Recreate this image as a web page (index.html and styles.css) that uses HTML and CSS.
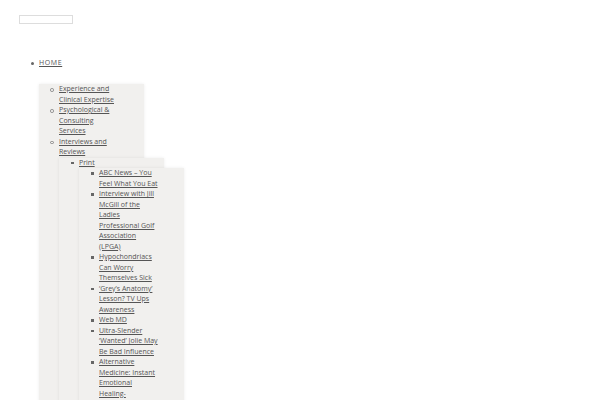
FILE: index.html
```html
<!DOCTYPE html>
<html>
<head>
<meta charset="utf-8">
<link rel="stylesheet" href="styles.css">
</head>
<body>
<div class="page">
  <div class="search"></div>
  <ul class="menu">
    <li><a class="top-link" href="#">HOME</a>
      <ul class="sub lvl2">
        <li><a href="#">Experience and Clinical Expertise</a></li>
        <li><a href="#">Psychological &amp; Consulting Services</a></li>
        <li><a href="#">Interviews and Reviews</a>
          <ul class="sub lvl3">
            <li><a href="#">Print</a>
              <ul class="sub lvl4">
                <li><a href="#">ABC News – You Feel What You Eat</a></li>
                <li><a href="#">Interview with Jill McGill of the Ladies Professional Golf Association (LPGA)</a></li>
                <li><a href="#">Hypochondriacs Can Worry Themselves Sick</a></li>
                <li><a href="#">‘Grey’s Anatomy’ Lesson? TV Ups Awareness</a></li>
                <li><a href="#">Web MD</a></li>
                <li><a href="#">Ultra-Slender ‘Wanted’ Jolie May Be Bad Influence</a></li>
                <li><a href="#">Alternative Medicine: Instant Emotional Healing- Acupressure for the Emotions</a></li>
                <li><a href="#">Stress Relief</a></li>
              </ul>
            </li>
          </ul>
        </li>
      </ul>
    </li>
  </ul>
</div>
</body>
</html>
```
FILE: styles.css
```css
html, body {
  margin: 0;
  padding: 0;
  background: #ffffff;
}
body {
  font-family: "Open Sans", "Liberation Sans", sans-serif;
  font-size: 7px;
  line-height: 10.5px;
  color: #555555;
}
.page {
  padding: 15px 0 0 19px;
}
.search {
  width: 52px;
  height: 7px;
  border: 1px solid #dddddd;
  background: #ffffff;
}
ul {
  list-style: none;
}
li {
  position: relative;
}
li::before {
  content: "";
  position: absolute;
  left: -8px;
  top: 4px;
  width: 2.5px;
  height: 2.5px;
  background: #666666;
}
.menu {
  margin: 34px 0 0 0;
  padding: 0 0 0 20px;
}
.menu > li::before {
  border-radius: 50%;
  left: -8.5px;
  width: 3px;
  height: 3px;
}
.lvl2 > li::before {
  box-sizing: border-box;
  border-radius: 50%;
  left: -9px;
  width: 3.5px;
  height: 3.5px;
  background: transparent;
  border: 0.8px solid #888888;
}
a {
  color: #555555;
  text-decoration: underline;
}
.top-link {
  letter-spacing: 0.6px;
}
.sub {
  width: 105px;
  box-sizing: border-box;
  margin: 0;
  padding: 0 25.5px 0 20px;
  background: #f1f0ee;
  box-shadow: 0 0 3px rgba(0, 0, 0, 0.08);
}
.menu > li > .sub {
  margin-top: 15.6px;
}
```
